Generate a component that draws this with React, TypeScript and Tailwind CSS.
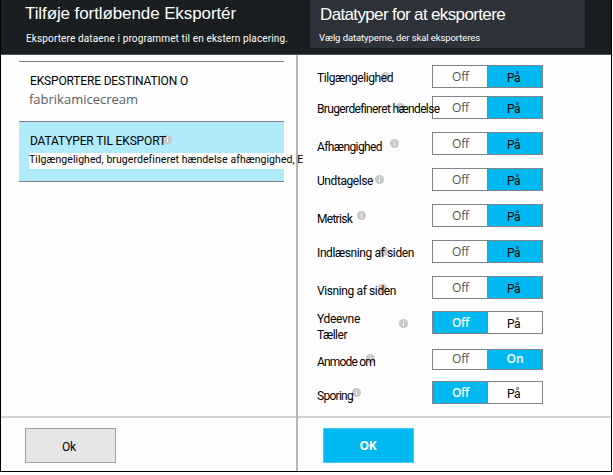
import { useLayoutEffect, useRef } from "react";

/* One line of text whose tracking is adjusted so that it spans `width` pixels. */
function Line({ text, width, className = "" }: { text: string; width: number; className?: string }) {
  const ref = useRef<HTMLSpanElement>(null);
  useLayoutEffect(() => {
    const el = ref.current;
    if (!el) return;
    el.style.letterSpacing = "0px";
    const natural = el.getBoundingClientRect().width;
    el.style.letterSpacing = `${(width - natural) / text.length}px`;
  }, [text, width]);
  return (
    <span ref={ref} className={`block w-max whitespace-nowrap ${className}`}>
      {text}
    </span>
  );
}

function Info() {
  return (
    <svg viewBox="0 0 9 9" className="block size-[9px]">
      <circle cx="4.5" cy="4.5" r="4.5" fill="#c8c8c8" />
      <path d="M4 2h1v1H4zM4 4h1v3H4z" fill="#fff" />
    </svg>
  );
}

type Row = {
  lines: [string, number][];
  gap: string;
  shift: string;
  icon: string;
  on: boolean;
  english?: boolean;
};

const rows: Row[] = [
  { lines: [["Tilgængelighed", 76]], gap: "mt-[10px]", shift: "pt-[5px]", icon: "left-[65px] top-[7px]", on: true },
  { lines: [["Brugerdefineret hændelse", 122]], gap: "mt-[8px]", shift: "pt-[5px]", icon: "left-[80px] top-[7px]", on: true },
  { lines: [["Afhængighed", 65]], gap: "mt-[13px]", shift: "pt-[7px]", icon: "left-[74px] top-[7px]", on: true },
  { lines: [["Undtagelse", 56]], gap: "mt-[13px]", shift: "pt-[5px]", icon: "left-[59px] top-[7px]", on: true },
  { lines: [["Metrisk", 35]], gap: "mt-[13px]", shift: "pt-[7px]", icon: "left-[41px] top-[7px]", on: true },
  { lines: [["Indlæsning af siden", 97]], gap: "mt-[13px]", shift: "pt-[5px]", icon: "left-[63px] top-[7px]", on: true },
  { lines: [["Visning af siden", 79]], gap: "mt-[13px]", shift: "pt-[7px]", icon: "left-[62px] top-[8px]", on: true },
  { lines: [["Ydeevne", 43], ["Tæller", 30]], gap: "mt-[12px]", shift: "", icon: "left-[83px] top-[8px]", on: false },
  { lines: [["Anmode om", 58]], gap: "mt-[15px]", shift: "pt-[5px]", icon: "left-[50px] top-[5px]", on: true, english: true },
  { lines: [["Sporing", 36]], gap: "mt-[11px]", shift: "pt-[7px]", icon: "left-[36px] top-[7px]", on: false },
];

function Toggle({ on, english }: { on: boolean; english?: boolean }) {
  return (
    <div
      className={`flex w-[111px] shrink-0 border border-[#808388] ${english ? "h-[21px]" : "h-[23px]"}`}
    >
      <div
        className={`flex w-[55px] justify-center border-r border-[#808388] font-['Open_Sans',sans-serif] text-[12px] ${
          on ? "bg-white text-[#505358]" : "bg-[#00b9f1] font-semibold text-white"
        } ${english ? "leading-[18px]" : "leading-[22px]"}`}
      >
        <Line text="Off" width={17} className="ml-px" />
      </div>
      <div
        className={`flex flex-1 justify-center ${on ? "bg-[#00b9f1]" : "bg-white"} ${
          english
            ? "font-['Open_Sans',sans-serif] text-[12px] leading-[18px] font-semibold text-white"
            : "font-[Roboto,sans-serif] text-[12px] leading-[21px] text-black"
        }`}
      >
        <Line text={english ? "On" : "På"} width={english ? 17 : 13} className={english ? "" : "-ml-[3px] pt-[2px]"} />
      </div>
    </div>
  );
}

export default function App() {
  return (
    <div className="h-[475px] w-[613px] overflow-hidden bg-white font-[Roboto,sans-serif] text-black">
      <div className="flex h-[472px] w-[612px] flex-col border-r border-b border-l border-black bg-[#fdfdfd]">
        <header className="flex h-[55px] shrink-0 border-b border-[#50545a] bg-[#1b1e21] font-['Liberation_Sans',sans-serif] text-white">
          <div className="flex w-[309px] flex-col pl-[24px]">
            <Line text="Tilføje fortløbende Eksportér" width={211} className="mt-[4px] text-[17px] leading-[20px]" />
            <Line
              text="Eksportere dataene i programmet til en ekstern placering."
              width={263}
              className="mt-[8px] pl-px font-[Roboto,sans-serif] text-[10px] leading-[13px]"
            />
          </div>
          <div className="flex h-[48px] w-[275px] flex-col bg-[#2d3139] pl-[9px]">
            <Line text="Datatyper for at eksportere" width={186} className="mt-[5px] pl-px text-[17px] leading-[20px]" />
            <Line
              text="Vælg datatyperne, der skal eksporteres"
              width={161}
              className="mt-[6px] font-[Roboto,sans-serif] text-[9.5px] leading-[13px]"
            />
          </div>
        </header>

        <div className="flex flex-1">
          <section className="flex w-[297px] shrink-0 flex-col border-r-2 border-[#b5b5b5]">
            <div className="mt-[6px] ml-[18px] flex h-[60px] w-[265px] flex-col border-t border-[#7f8186] pl-[10px]">
              <Line text="EKSPORTERE DESTINATION O" width={158} className="mt-[11px] ml-px text-[12px] leading-[16px]" />
              <Line
                text="fabrikamicecream"
                width={109}
                className="mt-px font-['Open_Sans',sans-serif] text-[13px] leading-[18px] text-[#5b5e63]"
              />
            </div>
            <div className="ml-[18px] flex h-[61px] w-[265px] flex-col border-y border-[#7f8186] bg-[#b1eaf9] pl-[10px]">
              <div className="relative mt-[11px] ml-px h-[16px]">
                <div className="absolute top-[2px] left-[133px]">
                  <Info />
                </div>
                <Line text="DATATYPER TIL EKSPORT" width={136} className="relative text-[12px] leading-[16px]" />
              </div>
              <div className="mt-[4px] h-[16px] bg-[#fdfdfd]">
                <Line
                  text="Tilgængelighed, brugerdefineret hændelse afhængighed, E"
                  width={274}
                  className="relative z-10 text-[10.5px] leading-[13px]"
                />
              </div>
            </div>
            <footer className="mt-auto flex h-[55px] border-t-2 border-[#d3d3d3] pt-[10px] pl-[24px]">
              <button className="flex h-[35px] w-[91px] justify-center border border-[#a0a0a0] bg-[#e5e5e5] text-[12px] leading-[35px]">
                <Line text="Ok" width={14} className="-ml-[3px] pt-px" />
              </button>
            </footer>
          </section>

          <section className="flex min-w-0 flex-1 flex-col">
            <div className="pl-[18px]">
              {rows.map((row) => (
                <div
                  key={row.lines[0][0]}
                  className={`relative flex ${row.english ? "h-[21px]" : "h-[23px]"} ${row.gap}`}
                >
                  <div className={`absolute ${row.icon}`}>
                    <Info />
                  </div>
                  <div className={`relative z-10 flex w-[116px] shrink-0 flex-col pl-px ${row.shift}`}>
                    {row.lines.map(([text, width]) => (
                      <Line key={text} text={text} width={width} className="text-[12px] leading-[16px]" />
                    ))}
                  </div>
                  <Toggle on={row.on} english={row.english} />
                </div>
              ))}
            </div>
            <footer className="mt-auto flex h-[55px] border-t-2 border-[#d3d3d3] pt-[10px] pl-[25px]">
              <button className="flex h-[35px] w-[91px] justify-center border border-[#41cbf4] bg-[#00b9f1] font-['Open_Sans',sans-serif] text-[12px] leading-[33px] font-bold text-white">
                <Line text="OK" width={17} className="-ml-px" />
              </button>
            </footer>
          </section>
        </div>
      </div>
    </div>
  );
}
